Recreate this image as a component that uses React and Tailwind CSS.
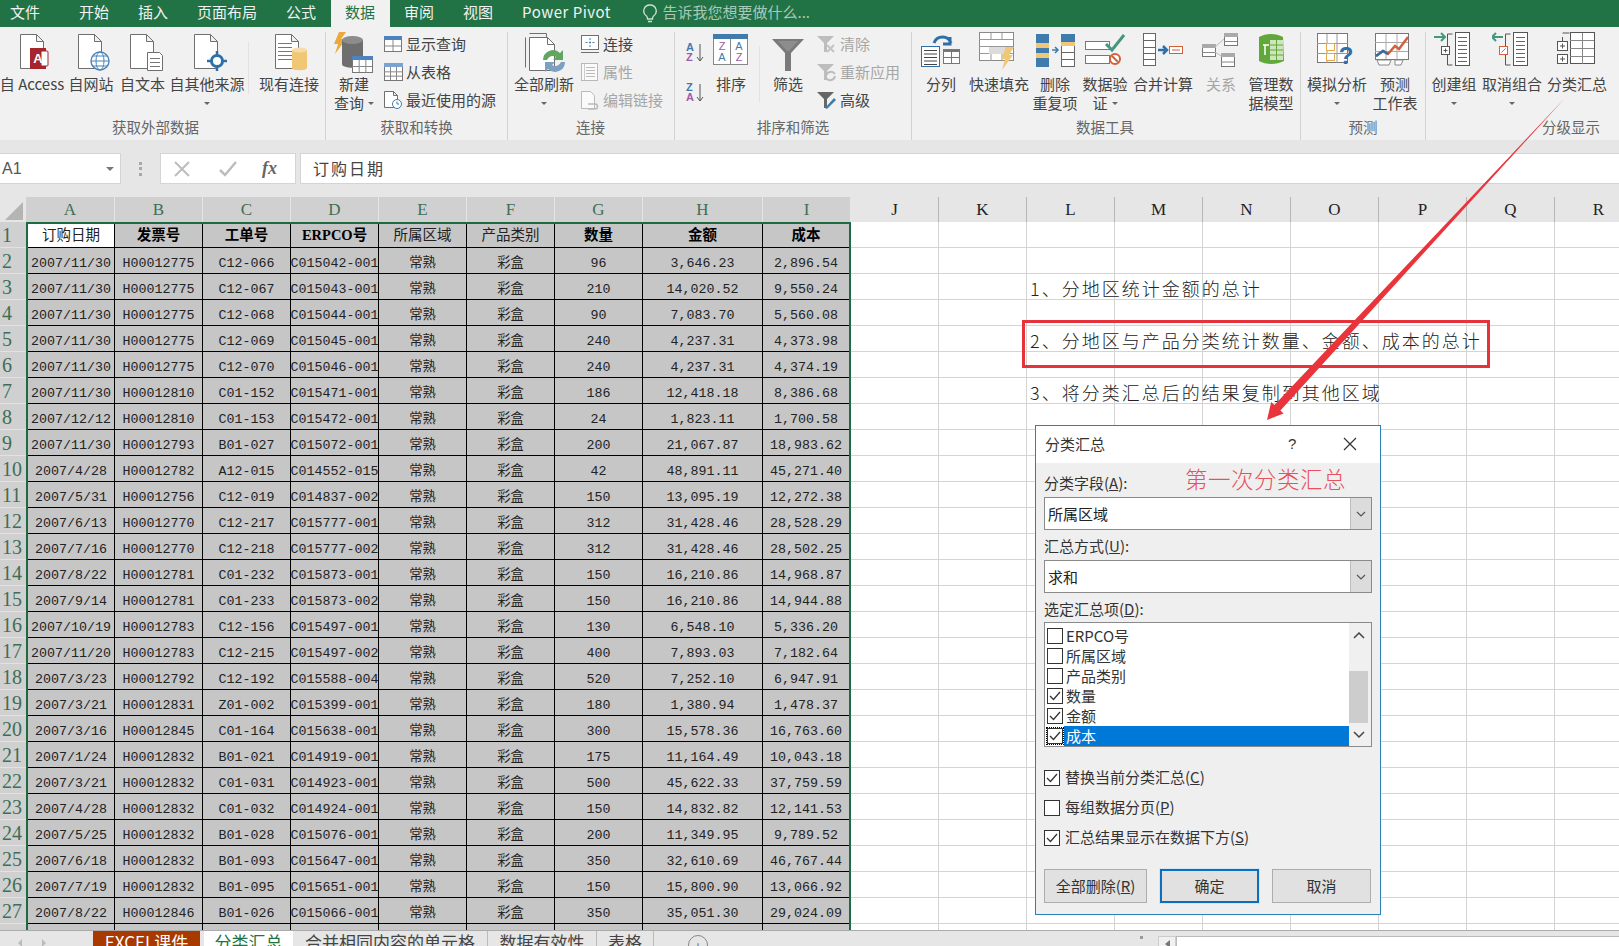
const CJK = '"Noto Sans CJK SC", "Liberation Sans", sans-serif'
const CELL = '"Liberation Mono", "Noto Sans CJK SC", monospace'
const HEAD = '"Liberation Serif", "Noto Sans CJK SC", serif'

const rows = [
  ['2007/11/30', 'H00012775', 'C12-066', 'C015042-001', '96', '3,646.23', '2,896.54'],
  ['2007/11/30', 'H00012775', 'C12-067', 'C015043-001', '210', '14,020.52', '9,550.24'],
  ['2007/11/30', 'H00012775', 'C12-068', 'C015044-001', '90', '7,083.70', '5,560.08'],
  ['2007/11/30', 'H00012775', 'C12-069', 'C015045-001', '240', '4,237.31', '4,373.98'],
  ['2007/11/30', 'H00012775', 'C12-070', 'C015046-001', '240', '4,237.31', '4,374.19'],
  ['2007/11/30', 'H00012810', 'C01-152', 'C015471-001', '186', '12,418.18', '8,386.68'],
  ['2007/12/12', 'H00012810', 'C01-153', 'C015472-001', '24', '1,823.11', '1,700.58'],
  ['2007/11/30', 'H00012793', 'B01-027', 'C015072-001', '200', '21,067.87', '18,983.62'],
  ['2007/4/28', 'H00012782', 'A12-015', 'C014552-015', '42', '48,891.11', '45,271.40'],
  ['2007/5/31', 'H00012756', 'C12-019', 'C014837-002', '150', '13,095.19', '12,272.38'],
  ['2007/6/13', 'H00012770', 'C12-217', 'C015777-001', '312', '31,428.46', '28,528.29'],
  ['2007/7/16', 'H00012770', 'C12-218', 'C015777-002', '312', '31,428.46', '28,502.25'],
  ['2007/8/22', 'H00012781', 'C01-232', 'C015873-001', '150', '16,210.86', '14,968.87'],
  ['2007/9/14', 'H00012781', 'C01-233', 'C015873-002', '150', '16,210.86', '14,944.88'],
  ['2007/10/19', 'H00012783', 'C12-156', 'C015497-001', '130', '6,548.10', '5,336.20'],
  ['2007/11/20', 'H00012783', 'C12-215', 'C015497-002', '400', '7,893.03', '7,182.64'],
  ['2007/3/23', 'H00012792', 'C12-192', 'C015588-004', '520', '7,252.10', '6,947.91'],
  ['2007/3/21', 'H00012831', 'Z01-002', 'C015399-001', '180', '1,380.94', '1,478.37'],
  ['2007/3/16', 'H00012845', 'C01-164', 'C015638-001', '300', '15,578.36', '16,763.60'],
  ['2007/1/24', 'H00012832', 'B01-021', 'C014919-001', '175', '11,164.49', '10,043.18'],
  ['2007/3/21', 'H00012832', 'C01-031', 'C014923-001', '500', '45,622.33', '37,759.59'],
  ['2007/4/28', 'H00012832', 'C01-032', 'C014924-001', '150', '14,832.82', '12,141.53'],
  ['2007/5/25', 'H00012832', 'B01-028', 'C015076-001', '200', '11,349.95', '9,789.52'],
  ['2007/6/18', 'H00012832', 'B01-093', 'C015647-001', '350', '32,610.69', '46,767.44'],
  ['2007/7/19', 'H00012832', 'B01-095', 'C015651-001', '150', '15,800.90', '13,066.92'],
  ['2007/8/22', 'H00012846', 'B01-026', 'C015066-001', '350', '35,051.30', '29,024.09'],
  ['', '', '', '', '', '', ''],
]

const colW = ['w-[87px]', 'w-[88px]', 'w-[88px]', 'w-[88px]', 'w-[88px]', 'w-[88px]', 'w-[88px]', 'w-[120px]', 'w-[86px]']
const headW = ['w-[89px]', 'w-[88px]', 'w-[88px]', 'w-[88px]', 'w-[88px]', 'w-[88px]', 'w-[88px]', 'w-[120px]', 'w-[88px]']
const selLetters = ['A', 'B', 'C', 'D', 'E', 'F', 'G', 'H', 'I']
const restLetters = ['J', 'K', 'L', 'M', 'N', 'O', 'P', 'Q', 'R']

const titles = [
  ['订购日期', false],
  ['发票号', true],
  ['工单号', true],
  ['ERPCO号', true],
  ['所属区域', false],
  ['产品类别', false],
  ['数量', true],
  ['金额', true],
  ['成本', true],
]

const line = '#6f6f6f'
const Doc = () => <path d="M.5.5h16l7 7v27H.5zM16.5.5v7h7" fill="#fff" stroke={line} />

function Svg({ children, w = 48, h = 42 }) {
  return (
    <svg width={w} height={h} viewBox={`0 0 ${w} ${h}`} className="block shrink-0">
      {children}
    </svg>
  )
}

function Lines({ x, y, n, w, gap = 4, color = '#777' }) {
  return Array.from({ length: n }, (_, i) => <path key={i} d={`M${x} ${y + i * gap + 0.5}h${w}`} stroke={color} />)
}

function MiniTable({ x, y, w, h, head = '#4f81bd', cols = 3, rws = 3 }) {
  const cw = w / cols
  const rh = (h - 4) / rws
  return (
    <g>
      <rect x={x + 0.5} y={y + 0.5} width={w} height={h} fill="#fff" stroke="#777" />
      <rect x={x} y={y} width={w + 1} height={4} fill={head} />
      {Array.from({ length: cols - 1 }, (_, i) => <path key={i} d={`M${x + cw * (i + 1) + 0.5} ${y + 4}v${h - 4}`} stroke="#888" />)}
      {Array.from({ length: rws - 1 }, (_, i) => <path key={i} d={`M${x} ${y + 4 + rh * (i + 1) + 0.5}h${w}`} stroke="#888" />)}
    </g>
  )
}

const IconAccess = () => (
  <Svg>
    <g transform="translate(12 2)"><Doc /></g>
    <rect x="22" y="16" width="16" height="21" fill="#a4262c" />
    <rect x="33" y="19" width="7" height="15" rx="1" fill="#fff" stroke="#a4262c" />
    <text x="30" y="31" textAnchor="middle" fontSize="13" fontWeight="700" fill="#fff" fontFamily="Liberation Sans">A</text>
  </Svg>
)
const IconWeb = () => (
  <Svg>
    <g transform="translate(11 2)"><Doc /></g>
    <circle cx="33" cy="29" r="9" fill="#fff" stroke="#4b83b8" strokeWidth="1.4" />
    <ellipse cx="33" cy="29" rx="4" ry="9" fill="none" stroke="#4b83b8" />
    <path d="M24 29h18M26 24h14M26 34h14" stroke="#4b83b8" />
  </Svg>
)
const IconText = () => (
  <Svg>
    <g transform="translate(11 2)"><Doc /></g>
    <path d="M28.500 20.500h12l3 3v15h-15z" fill="#fff" stroke={line} />
    <Lines x={31} y={26} n={3} w={10} />
  </Svg>
)
const IconOther = () => (
  <Svg>
    <g transform="translate(11 2)"><Doc /></g>
    <path d="M34 19v20M24 29h20" stroke="#2f6fa7" strokeWidth="2.5" />
    <circle cx="34" cy="29" r="5.500" fill="#fff" stroke="#2f6fa7" strokeWidth="3" />
  </Svg>
)
const IconExisting = () => (
  <Svg>
    <g transform="translate(10 2)"><Doc /></g>
    <Lines x={13} y={11} n={5} w={14} />
    <path d="M27 18h15v18c0 3-15 3-15 0z" fill="#f0c677" />
    <ellipse cx="34.500" cy="18" rx="7.500" ry="2.500" fill="#f6dca8" />
  </Svg>
)
const IconNewQuery = () => (
  <Svg h={42}>
    <path d="M9 0h7l-5 7h5L5 22l3-10H4z" fill="#eda83a" />
    <path d="M12 8h21v24c0 5-21 5-21 0z" fill="#6e6e6e" />
    <ellipse cx="22.500" cy="8" rx="10.500" ry="4" fill="#8c8c8c" />
    <MiniTable x={22} y={24} w={20} h={16} cols={3} rws={2} />
  </Svg>
)
const IconSmallQuery = () => <Svg w={20} h={18}><MiniTable x={1} y={1} w={17} h={15} cols={2} rws={2} /></Svg>
const IconFromTable = () => <Svg w={20} h={20}><MiniTable x={1} y={1} w={18} h={17} head="#7ba3cf" cols={3} rws={3} /></Svg>
const IconRecent = () => (
  <Svg w={20} h={20}>
    <path d="M1.500 1.500h9l4 4v12h-13zM10.500 1.500v4h4" fill="#fff" stroke={line} />
    <circle cx="14" cy="14" r="4.500" fill="#fff" stroke="#3f7cad" />
    <path d="M14 11.500V14h2" fill="none" stroke="#3f7cad" />
  </Svg>
)
const IconRefresh = () => (
  <Svg w={46}>
    <path d="M5.500 1.500h17v4M1.500 5.500v30" fill="none" stroke={line} />
    <path d="M5.500 5.500h18l7 7v26h-25z" fill="#fff" stroke={line} />
    <path d="M23.500 5.500v7h7" fill="none" stroke={line} />
    <path d="M19 28a10 10 0 0 1 17-7l3-3v10h-10l3-3a6 6 0 0 0-9 3z" fill="#5fa65f" />
    <path d="M41 30a10 10 0 0 1-17 7l-3 3V30h10l-3 3a6 6 0 0 0 9-3z" fill="#7d9fc0" />
  </Svg>
)
const IconConn = ({ dim }) => (
  <Svg w={20} h={20}>
    <rect x="1.500" y="1.500" width="17" height="14" fill="#fff" stroke={dim ? '#bbb' : line} />
    <path d="M10 4v9M5.500 8.500h9" stroke="#3f7cad" strokeDasharray="2 1.500" />
    <path d="M1 18.500h18" stroke={dim ? '#bbb' : line} />
  </Svg>
)
const IconProps = () => (
  <Svg w={20} h={20}>
    <rect x="1.500" y="1.500" width="16" height="17" fill="#fafafa" stroke="#b9b9b9" />
    <Lines x={6} y={5} n={4} w={9} gap={3} color="#bbb" />
    <path d="M4.500 2v16" stroke="#ccc" />
  </Svg>
)
const IconEditLink = () => (
  <Svg w={20} h={20}>
    <path d="M1.500 1.500h9l4 4v13h-13z" fill="#fafafa" stroke="#bbb" />
    <path d="M8 14h7a2.500 2.500 0 0 1 0 5H8" fill="none" stroke="#bbb" strokeWidth="1.500" />
  </Svg>
)
const IconAZ = ({ flip }) => (
  <div className="relative h-[24px] w-[18px]">
    <span className="absolute left-0 top-[-3px] text-[11px] leading-[12px] font-bold text-[#3f7cad]" style={{ fontFamily: 'Liberation Sans' }}>{flip ? 'Z' : 'A'}</span>
    <span className="absolute left-0 top-[7px] text-[11px] leading-[12px] font-bold text-[#a05aa8]" style={{ fontFamily: 'Liberation Sans' }}>{flip ? 'A' : 'Z'}</span>
    <svg width="8" height="20" className="absolute left-[10px] top-[-1px]"><path d="M4 1v17M1 14l3 4 3-4" fill="none" stroke="#555" /></svg>
  </div>
)
const IconSort = () => (
  <Svg w={36} h={32}>
    <rect x=".5" y=".5" width="34" height="30" fill="#fff" stroke="#888" />
    <rect x="0" y="0" width="35" height="5" fill="#3f7cad" />
    <path d="M17.500 5v26" stroke="#888" />
    <text x="9" y="16" textAnchor="middle" fontSize="11" fill="#a05aa8" fontFamily="Liberation Sans">Z</text>
    <text x="9" y="27" textAnchor="middle" fontSize="11" fill="#3f7cad" fontFamily="Liberation Sans">A</text>
    <text x="26" y="16" textAnchor="middle" fontSize="11" fill="#3f7cad" fontFamily="Liberation Sans">A</text>
    <text x="26" y="27" textAnchor="middle" fontSize="11" fill="#a05aa8" fontFamily="Liberation Sans">Z</text>
  </Svg>
)
const IconFilter = () => (
  <Svg w={36} h={36}>
    <path d="M2 2h32L21 16v18h-6V16z" fill="#7a7a7a" />
    <path d="M8 4h20l-9 10h-2z" fill="#8d8d8d" />
  </Svg>
)
const Funnel = ({ fill }) => <path d="M0 2h17L10 9v9H7V9z" fill={fill} />
const IconClear = () => (
  <Svg w={20} h={20}>
    <Funnel fill="#bdbdbd" />
    <path d="M10 11l7 7M17 11l-7 7" stroke="#c4c4c4" strokeWidth="2" />
  </Svg>
)
const IconReapply = () => (
  <Svg w={20} h={20}>
    <Funnel fill="#bdbdbd" />
    <path d="M9 14a5 5 0 0 1 9-2M18 14a5 5 0 0 1-9 2" fill="none" stroke="#bcbcbc" strokeWidth="2" />
  </Svg>
)
const IconAdvanced = () => (
  <Svg w={20} h={20}>
    <Funnel fill="#666" />
    <path d="M8 18l9-10 2 2-9 9z" fill="#3f7cad" />
  </Svg>
)
const IconSplit = () => (
  <Svg w={40} h={36}>
    <path d="M13 10a9 9 0 0 1 17 0M29 4v7h-7" transform="translate(0 1)" fill="none" stroke="#2f6fa7" strokeWidth="3" />
    <rect x=".5" y="14.500" width="18" height="20" fill="#fff" stroke="#2f6fa7" />
    <Lines x={3} y={18} n={5} w={13} gap={3.500} color="#444" />
    <rect x="22.500" y="17.500" width="16" height="14" fill="#fff" stroke="#777" />
    <rect x="22" y="17" width="17" height="3" fill="#777" />
    <path d="M30.500 20v12M23 25.500h15" stroke="#777" />
  </Svg>
)
const IconFlash = () => (
  <Svg w={40} h={38}>
    <rect x=".5" y=".5" width="34" height="28" fill="#fff" stroke="#8a8a8a" />
    <path d="M0 7.500h34M0 14.500h34M0 21.500h34M12 1v7M23 1v7M12 22v7M23 22v7" stroke="#999" />
    <rect x="10" y="15" width="18" height="7" fill="#dcdcdc" />
    <path d="M27 15h8l-5 8h4L23 38l3-11h-4z" fill="#f0c677" />
  </Svg>
)
const IconDedupe = () => (
  <Svg w={40} h={36}>
    <rect x="1" y="2" width="13" height="33" fill="#3f7cad" />
    <rect x="1" y="11" width="13" height="5" fill="#f0c677" />
    <rect x="1" y="21" width="13" height="5" fill="#f0c677" />
    <rect x="26.500" y="2.500" width="13" height="32" fill="#fff" stroke="#666" />
    <rect x="26" y="2" width="14" height="8" fill="#3f7cad" />
    <rect x="26" y="10" width="14" height="4" fill="#f0c677" />
    <path d="M26 20.500h14M26 27.500h14" stroke="#666" />
    <path d="M17 18h5M20 15l3 3-3 3" stroke="#3f7cad" strokeWidth="1.500" fill="none" />
  </Svg>
)
const IconValidate = () => (
  <Svg w={40} h={36}>
    <rect x=".5" y="9.500" width="24" height="8" fill="#fff" stroke="#777" />
    <rect x=".5" y="23.500" width="24" height="8" fill="#fff" stroke="#777" />
    <path d="M21 12l6 6 12-15" fill="none" stroke="#47967f" strokeWidth="3" />
    <circle cx="30" cy="27" r="5" fill="#fff" stroke="#d2603a" strokeWidth="2" />
    <path d="M27 24l6 6" stroke="#d2603a" strokeWidth="2" />
  </Svg>
)
const IconConsolidate = () => (
  <Svg w={40} h={36}>
    <rect x=".5" y="1.500" width="12" height="32" fill="#fff" stroke="#666" />
    <path d="M0 8.500h12M0 15.500h12M0 21.500h12M0 27.500h12" stroke="#666" />
    <path d="M15 18h7M20 14l4 4-4 4" fill="none" stroke="#2f6fa7" strokeWidth="2.500" />
    <rect x="26.500" y="14.500" width="13" height="7" fill="#fff" stroke="#d2603a" />
    <path d="M29 18h8" stroke="#d2603a" />
  </Svg>
)
const IconRelation = () => (
  <Svg w={38} h={36}>
    <MiniTable x={0} y={12} w={13} h={12} head="#aaa" cols={1} rws={2} />
    <MiniTable x={22} y={1} w={13} h={12} head="#aaa" cols={1} rws={2} />
    <MiniTable x={19} y={21} w={13} h={13} head="#aaa" cols={1} rws={2} />
    <path d="M13 15l9-8M13 20l6 4" stroke="#bbb" />
  </Svg>
)
const IconModel = () => (
  <Svg w={30} h={34}>
    <path d="M3 5C10 1 20 1 27 5l1 24C20 33 10 33 3 29z" fill="#61a83a" />
    <path d="M14 8h13v20H14z" fill="#cfe3bf" />
    <path d="M14 13h13M14 18h13M14 23h13M20.500 8v20" stroke="#61a83a" />
    <path d="M7 13h6M9 13v10" stroke="#fff" strokeWidth="1.500" />
  </Svg>
)
const IconWhatIf = () => (
  <Svg w={40} h={36}>
    <rect x=".5" y="1.500" width="30" height="29" fill="#fff" stroke="#777" />
    <path d="M10 2v29M20 2v29M0 11.500h31M0 21.500h31" stroke="#999" />
    <rect x="9.500" y="11.500" width="8" height="7" fill="#fff" stroke="#e4a84e" />
    <rect x="9.500" y="21.500" width="8" height="7" fill="#fff" stroke="#e4a84e" />
    <text x="29" y="32" textAnchor="middle" fontSize="24" fontWeight="700" fill="#2f6fa7" fontFamily="Liberation Sans">?</text>
  </Svg>
)
const IconForecast = () => (
  <Svg w={40} h={36}>
    <rect x=".5" y="1.500" width="33" height="26" fill="#fff" stroke="#777" />
    <path d="M11 2v25M22 2v25M0 10.500h33M0 19.500h33" stroke="#aaa" />
    <path d="M1 24l7-5 5 3 7-8 4 3 9-12" fill="none" stroke="#d2603a" strokeWidth="2.500" />
    <path d="M1 24l7-5 5 3" fill="none" stroke="#2f6fa7" strokeWidth="2.500" />
    <path d="M2 28h14l-2 5H4zM20 28h8l-2 5h-6z" fill="#fff" stroke="#888" />
  </Svg>
)
const Outline = ({ box, arrow, color }) => (
  <Svg w={40} h={36}>
    <path d={arrow} fill="none" stroke={color} strokeWidth="2" />
    <path d="M18.500 2h-5v31h5" fill="none" stroke="#555" />
    <rect x="21.500" y=".5" width="14" height="33" fill="#fff" stroke="#555" />
    <Lines x={24} y={5} n={7} w={9} gap={4} color="#666" />
    {box}
  </Svg>
)
const IconGroup = () => (
  <Outline
    color="#47967f"
    arrow="M0 5h11M7 1l4 4-4 4"
    box={<g><rect x="7.500" y="14.500" width="8" height="8" fill="#fff" stroke="#555" /><path d="M9.500 18.500h4M11.500 16.500v4" stroke="#555" /></g>}
  />
)
const IconUngroup = () => (
  <Outline
    color="#47967f"
    arrow="M0 5h11M4 1L0 5l4 4"
    box={<g><rect x="7.500" y="14.500" width="8" height="8" fill="#fff" stroke="#d2603a" /><path d="M9.500 20.500l4-4" stroke="#d2603a" /></g>}
  />
)
const IconSubtotal = () => (
  <Svg w={40} h={36}>
    <rect x="13.500" y=".5" width="24" height="31" fill="#fff" stroke="#555" />
    <path d="M25.500 1v31M13 8.500h24M13 16.500h24M13 24.500h24" stroke="#888" />
    <rect x=".5" y="9.500" width="10" height="9" fill="#fff" stroke="#555" />
    <rect x=".5" y="22.500" width="10" height="9" fill="#fff" stroke="#555" />
    <path d="M3 14h5M5.500 11.500v5M3 27h5M5.500 24.500v5" stroke="#555" />
    <path d="M5.500 5v4M5.500 1h7" stroke="#555" />
  </Svg>
)

function Caret() {
  return <span className="inline-block h-0 w-0 border-x-[3px] border-t-[3px] border-x-transparent border-t-[#666]" />
}

function Big({ w, icon, a, b, caret, dim, iconClass = '' }) {
  return (
    <div className={`flex shrink-0 flex-col items-center ${w} ${dim ? 'text-[#a6a6a6]' : 'text-[#444]'}`}>
      <div className={`flex h-[43px] items-start justify-center ${iconClass}`}>{icon}</div>
      <div className="h-[19px] whitespace-nowrap text-[15px] leading-[18px]">{a}</div>
      {b && (
        <div className="flex h-[18px] items-center gap-1 whitespace-nowrap text-[15px] leading-[18px]">
          {b}
          {caret === 'inline' && <Caret />}
        </div>
      )}
      {caret === 'below' && <div className="flex h-[18px] items-center"><Caret /></div>}
    </div>
  )
}

function Small({ icon, label, dim }) {
  return (
    <div className={`flex h-[24px] items-center gap-[3px] whitespace-nowrap text-[15px] ${dim ? 'text-[#a6a6a6]' : 'text-[#444]'}`}>
      <span className="flex h-[20px] w-[20px] items-center justify-center">{icon}</span>
      {label}
    </div>
  )
}

function Group({ w, label, labelClass = 'justify-center', children, last }) {
  return (
    <div className={`flex shrink-0 flex-col ${w} ${last ? '' : 'border-r border-[#d2d2d2]'}`}>
      <div className="flex h-[84px]">{children}</div>
      <div className={`flex h-[24px] items-center pb-[3px] text-[14.500px] whitespace-nowrap text-[#666] ${labelClass}`}>{label}</div>
    </div>
  )
}

function Ribbon() {
  return (
    <div className="flex h-[113px] shrink-0 bg-[#f1f1f1] pt-[5px]">
      <Group w="w-[326px]" label="获取外部数据" labelClass="justify-start pl-[112px]">
        <Big w="w-[64px]" icon={<IconAccess />} a="自 Access" />
        <Big w="w-[54px]" icon={<IconWeb />} a="自网站" />
        <Big w="w-[49px]" icon={<IconText />} a="自文本" />
        <Big w="w-[80px]" icon={<IconOther />} a="自其他来源" caret="below" />
        <div className="my-[10px] mr-[6px] ml-[1px] h-[52px] w-px bg-[#e2e2e2]" />
        <Big w="w-[68px]" icon={<IconExisting />} a="现有连接" />
      </Group>
      <Group w="w-[182px]" label="获取和转换">
        <Big w="w-[56px]" icon={<IconNewQuery />} a="新建" b="查询" caret="inline" />
        <div className="ml-[1px] flex flex-col gap-[4px]">
          <Small icon={<IconSmallQuery />} label="显示查询" />
          <Small icon={<IconFromTable />} label="从表格" />
          <Small icon={<IconRecent />} label="最近使用的源" />
        </div>
      </Group>
      <Group w="w-[167px]" label="连接" labelClass="justify-start pl-[68px]">
        <Big w="w-[72px]" icon={<IconRefresh />} a="全部刷新" caret="below" iconClass="pl-[6px]" />
        <div className="flex flex-col gap-[4px]">
          <Small icon={<IconConn />} label="连接" />
          <Small icon={<IconProps />} label="属性" dim />
          <Small icon={<IconEditLink />} label="编辑链接" dim />
        </div>
      </Group>
      <Group w="w-[237px]" label="排序和筛选">
        <div className="ml-[11px] flex w-[21px] flex-col gap-[16px] pt-[12px]">
          <IconAZ />
          <IconAZ flip />
        </div>
        <Big w="w-[48px]" icon={<IconSort />} a="排序" iconClass="pt-[2px]" />
        <div className="my-[14px] ml-[4px] mr-[8px] h-[56px] w-px bg-[#e2e2e2]" />
        <Big w="w-[40px]" icon={<IconFilter />} a="筛选" iconClass="pt-[5px]" />
        <div className="ml-[9px] flex flex-col gap-[4px]">
          <Small icon={<IconClear />} label="清除" dim />
          <Small icon={<IconReapply />} label="重新应用" dim />
          <Small icon={<IconAdvanced />} label="高级" />
        </div>
      </Group>
      <Group w="w-[389px]" label="数据工具" labelClass="justify-start pl-[164px]">
        <Big w="w-[58px]" icon={<IconSplit />} a="分列" />
        <Big w="w-[58px]" icon={<IconFlash />} a="快速填充" />
        <Big w="w-[54px]" icon={<IconDedupe />} a="删除" b="重复项" />
        <Big w="w-[46px]" icon={<IconValidate />} a="数据验" b="证" caret="inline" />
        <Big w="w-[70px]" icon={<IconConsolidate />} a="合并计算" />
        <Big w="w-[46px]" icon={<IconRelation />} a="关系" dim />
        <Big w="w-[54px]" icon={<IconModel />} a="管理数" b="据模型" />
      </Group>
      <Group w="w-[125px]" label="预测">
        <div className="w-[6px] shrink-0" />
        <Big w="w-[60px]" icon={<IconWhatIf />} a="模拟分析" caret="below" />
        <Big w="w-[56px]" icon={<IconForecast />} a="预测" b="工作表" />
      </Group>
      <Group w="w-[194px]" label="分级显示" labelClass="justify-start pl-[116px]" last>
        <Big w="w-[56px]" icon={<IconGroup />} a="创建组" caret="below" />
        <Big w="w-[60px]" icon={<IconUngroup />} a="取消组合" caret="below" />
        <Big w="w-[70px]" icon={<IconSubtotal />} a="分类汇总" />
      </Group>
    </div>
  )
}

function TopTabs() {
  const tabs = ['开始', '插入', '页面布局', '公式', '数据', '审阅', '视图', 'Power Pivot']
  return (
    <div className="flex h-[27px] shrink-0 bg-[#217346] text-[15px] text-[#f2f2f2]">
      <div className="w-[64.500px] pt-[1px] pl-[10px]">文件</div>
      {tabs.map((t) => (
        <div key={t} className={`px-[14.500px] pt-[1px] ${t === '数据' ? 'bg-[#f1f1f1] text-[#217346]' : ''} ${t === 'Power Pivot' ? 'tracking-[0.500px]' : ''}`}>{t}</div>
      ))}
      <div className="ml-[16px] flex items-start gap-[5px] pt-[1px] text-[#a9c9b7]">
        <svg width="16" height="20" viewBox="0 0 16 20" className="mt-[3px]">
          <path d="M8 1a6 6 0 0 0-3.500 11c.8.7 1 1.500 1 3h5c0-1.500.2-2.300 1-3A6 6 0 0 0 8 1zM6 17.500h4" fill="none" stroke="#cfe0d6" strokeWidth="1.300" />
        </svg>
        告诉我您想要做什么...
      </div>
    </div>
  )
}

function FormulaBar() {
  return (
    <div className="flex shrink-0 flex-col bg-[#e6e6e6] pt-[13px] pb-[13px]">
      <div className="flex h-[31px]">
        <div className="flex w-[121px] items-center justify-between border border-l-0 border-[#d4d4d4] bg-white pr-[6px] text-[16px] text-[#555]" style={{ fontFamily: 'Liberation Sans' }}>
          <span className="pl-[2px]">A1</span>
          <span className="h-0 w-0 border-x-[4px] border-t-[4px] border-x-transparent border-t-[#777]" />
        </div>
        <div className="flex w-[39px] items-center justify-center gap-0">
          <span className="flex h-[14px] w-[3px] flex-col justify-between">
            <i className="block h-[3px] w-[3px] bg-[#a8a8a8]" />
            <i className="block h-[3px] w-[3px] bg-[#a8a8a8]" />
            <i className="block h-[3px] w-[3px] bg-[#a8a8a8]" />
          </span>
        </div>
        <div className="flex w-[136px] items-center border border-[#d4d4d4] bg-white">
          <svg width="16" height="16" viewBox="0 0 16 16" className="ml-[13px]"><path d="M1 1l14 14M15 1L1 15" stroke="#bdbdbd" strokeWidth="2" /></svg>
          <svg width="18" height="16" viewBox="0 0 18 16" className="ml-[29px]"><path d="M1 9l5 5L17 1" fill="none" stroke="#bdbdbd" strokeWidth="2.500" /></svg>
          <span className="ml-[25px] text-[18px] font-bold italic text-[#666]" style={{ fontFamily: 'Liberation Serif' }}>fx</span>
        </div>
        <div className="ml-[4px] flex flex-1 items-center border border-r-0 border-[#d4d4d4] bg-white pb-[2px] pl-[12px] text-[16px] tracking-[2px] text-[#444]">
          订购日期
        </div>
      </div>
    </div>
  )
}

function ColumnHeaders() {
  return (
    <div className="flex h-[25px] shrink-0 bg-[#e6e6e6] text-[17px] leading-[25px]" style={{ fontFamily: HEAD }}>
      <div className="flex w-[26px] shrink-0 items-end justify-end bg-[#e6e6e6] pr-[3px] pb-[2px]">
        <svg width="18" height="18"><path d="M18 0v18H0z" fill="#b4b4b4" /></svg>
      </div>
      {selLetters.map((l, i) => (
        <div key={l} className={`${headW[i]} shrink-0 border-r border-[#e6e6e6] bg-[#d0d0d0] text-center text-[#3f6e55]`}>{l}</div>
      ))}
      {restLetters.map((l) => (
        <div key={l} className="w-[88px] shrink-0 border-r border-[#b5b5b5] text-center text-[#222]">{l}</div>
      ))}
    </div>
  )
}

function RowHeader() {
  return (
    <div className="w-[26px] shrink-0 bg-[#d0d0d0] text-[20px] text-[#3f6e55]" style={{ fontFamily: HEAD }}>
      {Array.from({ length: 28 }, (_, i) => (
        <div key={i} className="h-[26px] overflow-visible border-b border-[#e2e2e2] pl-[2px] leading-[26px] whitespace-nowrap">{i + 1}</div>
      ))}
    </div>
  )
}

function DataBlock() {
  return (
    <div className="w-[825px] shrink-0 border-t-2 border-r-2 border-l-2 border-[#1e6b41] bg-[#c6c6c6] text-[13.300px] text-[#222]" style={{ fontFamily: CELL }}>
      <div className="flex h-[24px] border-b border-black">
        {titles.map(([t, bold], i) => (
          <div
            key={t}
            className={`flex shrink-0 items-center justify-center border-r border-black text-[14.500px] ${colW[i]} ${i === 0 ? 'bg-white' : ''} ${bold ? 'font-bold text-black' : ''} ${i === 8 ? 'border-r-0' : ''}`}
            style={{ fontFamily: HEAD }}
          >
            {t}
          </div>
        ))}
      </div>
      {rows.map((r, n) => {
        const cells = [r[0], r[1], r[2], r[3], n < 26 ? '常熟' : '', n < 26 ? '彩盒' : '', r[4], r[5], r[6]]
        return (
          <div key={n} className="flex h-[26px] border-b border-black">
            {cells.map((c, i) => (
              <div key={i} className={`flex shrink-0 items-center justify-center overflow-hidden border-r border-black pt-[6px] whitespace-nowrap ${colW[i]} ${i === 8 ? 'border-r-0' : ''}`}>
                {c}
              </div>
            ))}
          </div>
        )
      })}
    </div>
  )
}

const notes = {
  2: '1、分地区统计金额的总计',
  4: '2、分地区与产品分类统计数量、金额、成本的总计',
  6: '3、将分类汇总后的结果复制到其他区域',
}

function EmptyGrid() {
  return (
    <div className="flex-1 bg-white">
      {Array.from({ length: 28 }, (_, r) => (
        <div key={r} className="flex h-[26px] border-b border-[#d4d4d4]">
          {restLetters.map((l, c) => (
            <div key={l} className="relative w-[88px] shrink-0 border-r border-[#d4d4d4]">
              {c === 2 && notes[r] && (
                <span className="absolute top-[2px] left-[3px] z-10 text-[18px] leading-[24px] tracking-[2px] font-light whitespace-nowrap text-[#222]">
                  {notes[r]}
                </span>
              )}
            </div>
          ))}
        </div>
      ))}
    </div>
  )
}

function BottomTabs() {
  return (
    <div className="flex h-[16px] shrink-0 overflow-hidden border-t border-[#ababab] bg-[#e6e6e6] text-[17px] leading-[22px] text-[#444]">
      <div className="flex w-[93px] shrink-0 gap-[20px] pt-[8px] pl-[18px]">
        <span className="h-0 w-0 border-y-[4px] border-r-[4px] border-y-transparent border-r-[#bbb]" />
        <span className="h-0 w-0 border-y-[4px] border-l-[4px] border-y-transparent border-l-[#bbb]" />
      </div>
      <div className="w-[107px] shrink-0 bg-[#a83a00] text-center text-white">EXCEL课件</div>
      <div className="ml-[4px] w-[89px] shrink-0 bg-white text-center text-[#217346]">分类汇总</div>
      <div className="w-[195px] shrink-0 border-r border-[#bbb] text-center">合并相同内容的单元格</div>
      <div className="w-[109px] shrink-0 border-r border-[#bbb] text-center">数据有效性</div>
      <div className="w-[57px] shrink-0 border-r border-[#bbb] text-center">表格</div>
      <div className="mt-[4px] ml-[34px] flex h-[20px] w-[20px] shrink-0 items-start justify-center rounded-full border border-[#888] text-[#888]">+</div>
      <div className="ml-auto flex">
        <span className="mt-[5px] mr-[15px] h-[3px] w-[3px] bg-[#999]" />
        <div className="mt-[5px] flex h-[16px] w-[18px] items-start justify-center border border-[#ccc] bg-[#f1f1f1] pt-[3px]">
          <span className="h-0 w-0 border-y-[4px] border-r-[5px] border-y-transparent border-r-[#777]" />
        </div>
        <div className="mt-[5px] h-[16px] w-[443px] border border-r-0 border-[#bbb] bg-white" />
      </div>
    </div>
  )
}

function Check({ on, size = 'h-[16px] w-[16px]' }) {
  return (
    <span className={`flex shrink-0 items-center justify-center border border-[#333] bg-white ${size}`}>
      {on && (
        <svg width="12" height="10" viewBox="0 0 12 10"><path d="M1 5l3.500 3.500L11 1" fill="none" stroke="#333" strokeWidth="1.300" /></svg>
      )}
    </span>
  )
}

function Select({ value }) {
  return (
    <div className="flex h-[33px] border border-[#8a8a8a] bg-white">
      <div className="flex-1 pl-[3px] text-[15px] leading-[31px] text-[#222]">{value}</div>
      <div className="flex w-[21px] items-center justify-center border-l border-[#bdbdbd] bg-[#dcdcdc]">
        <svg width="10" height="6" viewBox="0 0 10 6"><path d="M1 1l4 4 4-4" fill="none" stroke="#555" strokeWidth="1.200" /></svg>
      </div>
    </div>
  )
}

function Label({ children, k }) {
  return (
    <div className="text-[15px] leading-[20px] text-[#333]">
      {children}(<u>{k}</u>):
    </div>
  )
}

function CheckLine({ on, text, k }) {
  return (
    <div className="flex h-[17px] items-center gap-[5px]">
      <Check on={on} />
      <span>{text}(<u>{k}</u>)</span>
    </div>
  )
}

const listItems = [['ERPCO号', false], ['所属区域', false], ['产品类别', false], ['数量', true], ['金额', true]]

function Dialog() {
  return (
    <div className="absolute top-[425px] left-[1035px] z-20 flex h-[490px] w-[346px] flex-col border border-[#2d7fb8] bg-[#efefef] text-[15px]" style={{ fontFamily: CJK }}>
      <div className="relative flex h-[37px] shrink-0 items-center bg-white pl-[9px] text-[#333]">
        分类汇总
        <span className="absolute top-[7px] left-[252px] text-[#333]" style={{ fontFamily: 'Liberation Sans' }}>?</span>
        <svg width="14" height="14" viewBox="0 0 14 14" className="absolute top-[11px] left-[307px]"><path d="M1 1l12 12M13 1L1 13" stroke="#333" strokeWidth="1.200" /></svg>
      </div>
      <div className="relative flex flex-1 flex-col px-[8px] pt-[10px]">
        <span className="absolute top-[-1px] left-[149px] text-[22.500px] leading-[32px] tracking-[0.500px] font-light whitespace-nowrap text-[#e8505b]">第一次分类汇总</span>
        <Label k="A">分类字段</Label>
        <div className="mt-[4px]"><Select value="所属区域" /></div>
        <div className="mt-[6px]"><Label k="U">汇总方式</Label></div>
        <div className="mt-[4px]"><Select value="求和" /></div>
        <div className="mt-[6px]"><Label k="D">选定汇总项</Label></div>
        <div className="mt-[3px] flex h-[125px] shrink-0 border border-[#8a8a8a] bg-white pt-[3px] pl-[2px]">
          <div className="flex-1">
            {listItems.map(([t, on]) => (
              <div key={t} className="flex h-[20px] items-center gap-[3px] text-[#333]">
                <Check on={on} /> {t}
              </div>
            ))}
            <div className="flex h-[20px] items-center">
              <span className="outline-1 outline-dotted outline-black"><Check on /></span>
              <div className="ml-[1px] h-[20px] flex-1 bg-[#0078d7] pl-[2px] leading-[20px] text-white">成本</div>
            </div>
          </div>
          <div className="relative -mt-[3px] w-[22px] bg-[#f0f0f0]">
            <svg width="12" height="8" viewBox="0 0 12 8" className="absolute top-[9px] left-[4px]"><path d="M1 6l5-5 5 5" fill="none" stroke="#444" strokeWidth="1.500" /></svg>
            <div className="absolute top-[48px] left-0 h-[52px] w-[19px] bg-[#cdcdcd]" />
            <svg width="12" height="8" viewBox="0 0 12 8" className="absolute top-[108px] left-[4px]"><path d="M1 1l5 5 5-5" fill="none" stroke="#444" strokeWidth="1.500" /></svg>
          </div>
        </div>
        <div className="mt-[22px] flex flex-col gap-[13px] text-[#333]">
          <CheckLine on text="替换当前分类汇总" k="C" />
          <CheckLine text="每组数据分页" k="P" />
          <CheckLine on text="汇总结果显示在数据下方" k="S" />
        </div>
        <div className="mt-[23px] flex text-[15px] text-[#333]">
          <div className="flex h-[34px] w-[103px] items-center justify-center border border-[#adadad] bg-[#e1e1e1]"><span>全部删除(<u>R</u>)</span></div>
          <div className="ml-[13px] flex h-[34px] w-[99px] items-center justify-center border-2 border-[#0d6ebd] bg-[#e1e1e1] shadow-[0_0_0_1px_#cfe6f7]">确定</div>
          <div className="ml-[13px] flex h-[34px] w-[99px] items-center justify-center border border-[#adadad] bg-[#e1e1e1]">取消</div>
        </div>
      </div>
    </div>
  )
}

function Annotations() {
  return (
    <>
      <div className="absolute top-[320px] left-[1022px] z-10 h-[48px] w-[468px] border-[3px] border-[#e6323a]" />
      <svg width="1619" height="946" className="pointer-events-none absolute top-0 left-0 z-10">
        <polygon points="1565,98 1280.400,410.400 1283.600,413.500 1267,420 1271.200,401.900 1274.400,405" fill="#e8343a" />
      </svg>
    </>
  )
}

export default function App() {
  return (
    <div className="relative flex h-[946px] w-[1619px] flex-col overflow-hidden bg-white" style={{ fontFamily: CJK }}>
      <TopTabs />
      <Ribbon />
      <FormulaBar />
      <ColumnHeaders />
      <div className="flex min-h-0 flex-1 overflow-hidden">
        <RowHeader />
        <DataBlock />
        <EmptyGrid />
      </div>
      <BottomTabs />
      <Annotations />
      <Dialog />
    </div>
  )
}
